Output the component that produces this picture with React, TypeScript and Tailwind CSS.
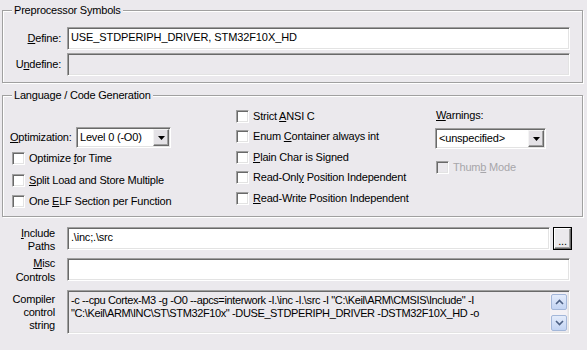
import React from 'react'

const sunken =
  'border border-t-[#a0a0a0] border-l-[#a0a0a0] border-r-white border-b-white shadow-[inset_1px_1px_0_#696969,inset_-1px_-1px_0_#e3e3e3]'

const Acc = ({ children }: { children: React.ReactNode }) => (
  <u className="underline underline-offset-[1px]">{children}</u>
)

const Group = ({ title, className, children }: { title: string; className: string; children: React.ReactNode }) => (
  <div className={`relative ml-[2px] w-[581px] border border-[#a0a0a0] shadow-[inset_1px_1px_0_#fff,1px_1px_0_#fff] ${className}`}>
    <span className="absolute left-[9px] top-[-7px] bg-[#ebe9ed] px-[2px]">{title}</span>
    {children}
  </div>
)

const Check = ({ label, disabled }: { label: React.ReactNode; disabled?: boolean }) => (
  <div className={`flex h-[13px] items-center gap-[4px] ${disabled ? 'text-[#a7a6aa]' : ''}`}>
    <span className={`h-[13px] w-[13px] shrink-0 ${disabled ? 'bg-[#ebe9ed]' : 'bg-white'} ${sunken}`} />
    <span>{label}</span>
  </div>
)

const Select = ({ value, width }: { value: string; width: string }) => (
  <div className={`flex h-[21px] items-stretch bg-white ${width} ${sunken} p-[1px]`}>
    <span className="flex-1 pl-[2px] leading-[17px]">{value}</span>
    <span className="flex w-[16px] items-center justify-center border border-t-[#f4f4f4] border-l-[#f4f4f4] border-r-[#696969] border-b-[#696969] bg-[#e4e2e6] shadow-[inset_-1px_-1px_0_#a0a0a0]">
      <svg width="7" height="4" viewBox="0 0 7 4"><path d="M0 0h7L3.5 4z" fill="#000" /></svg>
    </span>
  </div>
)

const ScrollBtn = ({ up }: { up?: boolean }) => (
  <span className="flex h-[16px] w-[16px] items-center justify-center rounded-[2px] border border-[#a3b7d9] bg-gradient-to-b from-[#e4ecfb] to-[#c3d4f3]">
    <svg width="9" height="6" viewBox="0 0 9 6">
      <path d={up ? 'M1 5l3.5-3.5L8 5' : 'M1 1l3.5 3.5L8 1'} fill="none" stroke="#4d6185" strokeWidth="1.6" />
    </svg>
  </span>
)

export default function App() {
  return (
    <div className="h-[350px] w-[587px] overflow-hidden bg-[#ebe9ed] pt-[10px] font-['Liberation_Sans',Arial,sans-serif] text-[11px] leading-[13px] tracking-[-0.2px] text-black">
      <Group title="Preprocessor Symbols" className="h-[73px]">
        <div className="flex flex-col gap-[3px] pt-[16px]">
          <div className="flex items-center">
            <span className="w-[58px] text-right"><Acc>D</Acc>efine:</span>
            <div className={`ml-[6px] h-[23px] w-[503px] bg-white pl-[3px] leading-[19px] tracking-[-0.1px] ${sunken}`}>USE_STDPERIPH_DRIVER, STM32F10X_HD</div>
          </div>
          <div className="flex items-center">
            <span className="w-[58px] text-right">U<Acc>n</Acc>define:</span>
            <div className={`ml-[6px] h-[23px] w-[503px] ${sunken}`} />
          </div>
        </div>
      </Group>

      <Group title="Language / Code Generation" className="mt-[12px] h-[122px]">
        <div className="flex">
          <div className="w-[233px] pl-[7px] pt-[31px]">
            <div className="flex items-center">
              <span className="w-[66px]"><Acc>O</Acc>ptimization:</span>
              <Select value="Level 0 (-O0)" width="w-[95px]" />
            </div>
            <div className="mt-[4px] flex flex-col gap-[8.5px] pl-[2px]">
              <Check label={<>Optimize <Acc>f</Acc>or Time</>} />
              <Check label={<><Acc>S</Acc>plit Load and Store Multiple</>} />
              <Check label={<>One <Acc>E</Acc>LF Section per Function</>} />
            </div>
          </div>
          <div className="flex w-[199px] flex-col gap-[7.4px] pt-[14px]">
            <Check label={<>Strict <Acc>A</Acc>NSI C</>} />
            <Check label={<>Enum <Acc>C</Acc>ontainer always int</>} />
            <Check label={<><Acc>P</Acc>lain Char is Signed</>} />
            <Check label={<>Read-Onl<Acc>y</Acc> Position Independent</>} />
            <Check label={<><Acc>R</Acc>ead-Write Position Independent</>} />
          </div>
          <div className="flex flex-col pt-[13px]">
            <span className="pl-[1px]"><Acc>W</Acc>arnings:</span>
            <div className="mt-[6px]">
              <Select value="<unspecified>" width="w-[111px]" />
            </div>
            <div className="ml-[1px] mt-[12px]">
              <Check disabled label={<>Thum<Acc>b</Acc> Mode</>} />
            </div>
          </div>
        </div>
      </Group>

      <div className="mt-[10px] flex flex-col">
        <div className="flex h-[23px] items-start">
          <span className="w-[55px] text-right"><Acc>I</Acc>nclude<br />Paths</span>
          <div className={`ml-[12px] h-[23px] w-[483px] bg-white pl-[3px] leading-[19px] ${sunken}`}>.\inc;.\src</div>
          <span className="ml-[3px] flex h-[23px] w-[19px] border border-black">
            <span className="flex flex-1 items-end justify-center border border-t-white border-l-white border-r-[#696969] border-b-[#696969] bg-[#ebe9ed] pb-[2px] leading-[10px] shadow-[inset_-1px_-1px_0_#a0a0a0]">...</span>
          </span>
        </div>
        <div className="mt-[8px] flex h-[23px] items-start">
          <span className="-mt-[2px] w-[55px] text-right leading-[14px]"><Acc>M</Acc>isc<br />Controls</span>
          <div className={`ml-[12px] h-[23px] w-[503px] bg-white ${sunken}`} />
        </div>
        <div className="mt-[9px] flex items-start">
          <span className="mt-[3px] w-[55px] text-right">Compiler<br />control<br />string</span>
          <div className={`ml-[12px] flex h-[44px] w-[503px] ${sunken} p-[2px] pr-[2px]`}>
            <div className="flex-1 whitespace-nowrap pl-[1px] pt-[1px] tracking-[-0.38px]">
              -c --cpu Cortex-M3 -g -O0 --apcs=interwork -I.\inc -I.\src -I "C:\Keil\ARM\CMSIS\Include" -I<br />
              "C:\Keil\ARM\INC\ST\STM32F10x" -DUSE_STDPERIPH_DRIVER -DSTM32F10X_HD -o
            </div>
            <div className="flex w-[17px] flex-col justify-between bg-[#f3f1f5] pl-[1px] pt-[1px]">
              <ScrollBtn up />
              <ScrollBtn />
            </div>
          </div>
        </div>
      </div>
    </div>
  )
}
